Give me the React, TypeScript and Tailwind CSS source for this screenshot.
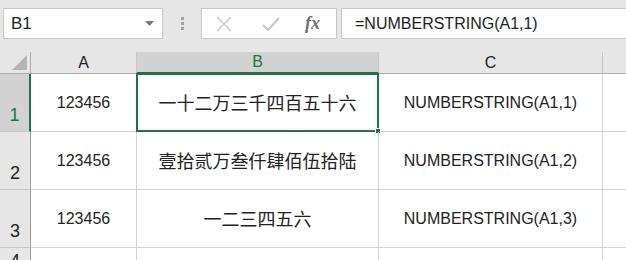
import React from 'react';

const rows = [
  { n: '1', a: '123456', b: '一十二万三千四百五十六', c: 'NUMBERSTRING(A1,1)' },
  { n: '2', a: '123456', b: '壹拾贰万叁仟肆佰伍拾陆', c: 'NUMBERSTRING(A1,2)' },
  { n: '3', a: '123456', b: '一二三四五六', c: 'NUMBERSTRING(A1,3)' },
];

const latin = { fontFamily: '"Liberation Sans", "Noto Sans CJK SC", sans-serif' };
const cjk = { fontFamily: '"Noto Sans CJK SC", "Liberation Sans", sans-serif' };

export default function App() {
  return (
    <div className="w-[626px] h-[260px] overflow-hidden bg-white text-[#222]" style={latin}>
      {/* formula bar */}
      <div className="h-[52px] bg-[#e6e6e6] flex items-start pt-[8px] pl-[3px]">
        <div className="w-[160px] h-[31px] bg-white border border-[#c6c6c6] flex items-center justify-between pl-[7px] pr-[8px]">
          <span className="text-[17px]">B1</span>
          <svg width="9" height="5" viewBox="0 0 9 5"><path d="M0 0h9L4.5 5z" fill="#777" /></svg>
        </div>
        <div className="w-[38px] h-[31px] flex flex-col items-center justify-center gap-[2px]">
          <div className="w-[3px] h-[3px] bg-[#a0a0a0]" />
          <div className="w-[3px] h-[3px] bg-[#a0a0a0]" />
          <div className="w-[3px] h-[3px] bg-[#a0a0a0]" />
        </div>
        <div className="w-[136px] h-[31px] bg-white border border-[#c6c6c6] flex items-center pl-[13px]">
          <svg width="18" height="18" viewBox="0 0 18 18"><path d="M2 2l14 14M16 2L2 16" stroke="#c8c8c8" strokeWidth="1.6" fill="none" /></svg>
          <svg width="20" height="18" viewBox="0 0 20 18" className="ml-[28px]"><path d="M2 10l5 5L18 3" stroke="#c8c8c8" strokeWidth="2.2" fill="none" /></svg>
          <span className="ml-[24px] italic text-[18px] text-[#6e6e6e] font-bold" style={{ fontFamily: '"Liberation Serif", serif' }}>fx</span>
        </div>
        <div className="ml-[4px] flex-1 h-[31px] bg-white border border-[#c6c6c6] border-r-0 flex items-center pl-[13px]">
          <span className="text-[16px]">=NUMBERSTRING(A1,1)</span>
        </div>
      </div>

      {/* sheet */}
      <div className="grid grid-cols-[31px_106px_242px_224px_23px] grid-rows-[22px_58px_58px_58px_20px]">
        {/* header */}
        <div className="bg-[#e6e6e6] border-r border-b border-[#ababab] flex items-end justify-end pr-[3px] pb-[3px]">
          <svg width="15" height="15" viewBox="0 0 15 15"><path d="M15 0v15H0z" fill="#b4b4b4" /></svg>
        </div>
        <div className="bg-[#e6e6e6] border-r border-b border-r-[#c6c6c6] border-b-[#ababab] flex items-center justify-center text-[16px]">A</div>
        <div className="bg-[#d2d2d2] border-r border-r-[#c6c6c6] border-b-2 border-b-[#217346] flex items-center justify-center text-[16px] text-[#217346]">B</div>
        <div className="bg-[#e6e6e6] border-r border-b border-r-[#c6c6c6] border-b-[#ababab] flex items-center justify-center text-[16px]">C</div>
        <div className="bg-[#e6e6e6] border-b border-[#ababab]" />

        {rows.map((r, i) => (
          <React.Fragment key={r.n}>
            <div className={`border-b border-b-[#c6c6c6] flex items-end justify-center pb-[2px] text-[18px] ${i === 0 ? 'bg-[#d2d2d2] text-[#217346] border-r-2 border-r-[#217346]' : 'bg-[#e6e6e6] border-r border-r-[#9b9b9b]'}`}>
              {r.n}
            </div>
            <div className="border-r border-b border-[#d4d4d4] flex items-center justify-center text-[16px]">{r.a}</div>
            <div className="relative border-r border-b border-[#d4d4d4] flex items-center justify-center text-[18px]" style={cjk}>
              {r.b}
              {i === 0 && (
                <div className="absolute -left-[1px] -top-[1px] -right-[1px] -bottom-[1px] border-2 border-[#217346]">
                  <div className="absolute -right-[4px] -bottom-[4px] w-[6px] h-[6px] bg-[#217346] border border-white" />
                </div>
              )}
            </div>
            <div className="border-r border-b border-[#d4d4d4] flex items-center justify-center text-[16px]">{r.c}</div>
            <div className="border-b border-[#d4d4d4]" />
          </React.Fragment>
        ))}

        <div className="bg-[#e6e6e6] border-r border-r-[#9b9b9b] flex items-start justify-center pt-[4px] text-[18px] leading-none">4</div>
        <div className="border-r border-[#d4d4d4]" />
        <div className="border-r border-[#d4d4d4]" />
        <div className="border-r border-[#d4d4d4]" />
        <div />
      </div>
    </div>
  );
}
